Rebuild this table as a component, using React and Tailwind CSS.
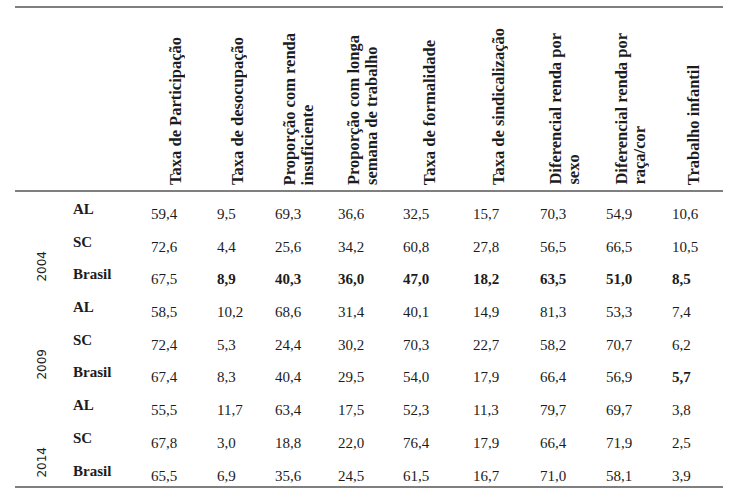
import React from "react";

const headers = [
  ["Taxa de Participação"],
  ["Taxa de desocupação"],
  ["Proporção com renda", "insuficiente"],
  ["Proporção com longa", "semana de trabalho"],
  ["Taxa de formalidade"],
  ["Taxa de sindicalização"],
  ["Diferencial renda por", "sexo"],
  ["Diferencial renda por", "raça/cor"],
  ["Trabalho infantil"],
];

const groups = [
  {
    year: "2004",
    rows: [
      { label: "AL", vals: ["59,4", "9,5", "69,3", "36,6", "32,5", "15,7", "70,3", "54,9", "10,6"], bold: [] },
      { label: "SC", vals: ["72,6", "4,4", "25,6", "34,2", "60,8", "27,8", "56,5", "66,5", "10,5"], bold: [] },
      { label: "Brasil", vals: ["67,5", "8,9", "40,3", "36,0", "47,0", "18,2", "63,5", "51,0", "8,5"], bold: [1, 2, 3, 4, 5, 6, 7, 8] },
    ],
  },
  {
    year: "2009",
    rows: [
      { label: "AL", vals: ["58,5", "10,2", "68,6", "31,4", "40,1", "14,9", "81,3", "53,3", "7,4"], bold: [] },
      { label: "SC", vals: ["72,4", "5,3", "24,4", "30,2", "70,3", "22,7", "58,2", "70,7", "6,2"], bold: [] },
      { label: "Brasil", vals: ["67,4", "8,3", "40,4", "29,5", "54,0", "17,9", "66,4", "56,9", "5,7"], bold: [8] },
    ],
  },
  {
    year: "2014",
    rows: [
      { label: "AL", vals: ["55,5", "11,7", "63,4", "17,5", "52,3", "11,3", "79,7", "69,7", "3,8"], bold: [] },
      { label: "SC", vals: ["67,8", "3,0", "18,8", "22,0", "76,4", "17,9", "66,4", "71,9", "2,5"], bold: [] },
      { label: "Brasil", vals: ["65,5", "6,9", "35,6", "24,5", "61,5", "16,7", "71,0", "58,1", "3,9"], bold: [] },
    ],
  },
];

export default function App() {
  return (
    <div className="w-[735px] h-[497px] bg-white pl-[15px] pt-[6px] text-[#1c1c1c] font-['Liberation_Serif',serif]">
      <div className="w-[708px] border-t-2 border-b-2 border-[#7f7f7f] grid grid-cols-[50px_78px_66px_58px_63px_65px_70px_67px_66px_66px_59px]">
        <div className="h-[184px] border-b-2 border-[#7f7f7f]" />
        <div className="h-[184px] border-b-2 border-[#7f7f7f]" />
        {headers.map((h, i) => (
          <div key={i} className="h-[184px] border-b-2 border-[#7f7f7f] flex items-end justify-center pb-[5px]">
            <div className="[writing-mode:vertical-rl] rotate-180 text-[16.5px] leading-[18px] font-bold whitespace-nowrap">
              {h.map((line, j) => (
                <React.Fragment key={j}>
                  {j > 0 && <br />}
                  {line}
                </React.Fragment>
              ))}
            </div>
          </div>
        ))}
        {groups.map((g) => (
          <React.Fragment key={g.year}>
            <div className="row-span-3 flex items-end justify-center pl-[4px] pb-[9px]">
              <div className="[writing-mode:vertical-rl] rotate-180 font-['DejaVu_Sans',sans-serif] text-[12px] leading-[12px] text-[#222]">
                {g.year}
              </div>
            </div>
            {g.rows.map((r, ri) => (
              <React.Fragment key={ri}>
                <div className="h-[32.7px] pl-[8px] pt-[8px] text-[15px] leading-[18px] font-bold">{r.label}</div>
                {r.vals.map((v, vi) => (
                  <div
                    key={vi}
                    className={
                      "h-[32.7px] pl-[8px] pt-[13px] text-[15px] leading-[18px] " +
                      (r.bold.includes(vi) ? "font-bold" : "font-normal")
                    }
                  >
                    {v}
                  </div>
                ))}
              </React.Fragment>
            ))}
          </React.Fragment>
        ))}
      </div>
    </div>
  );
}
